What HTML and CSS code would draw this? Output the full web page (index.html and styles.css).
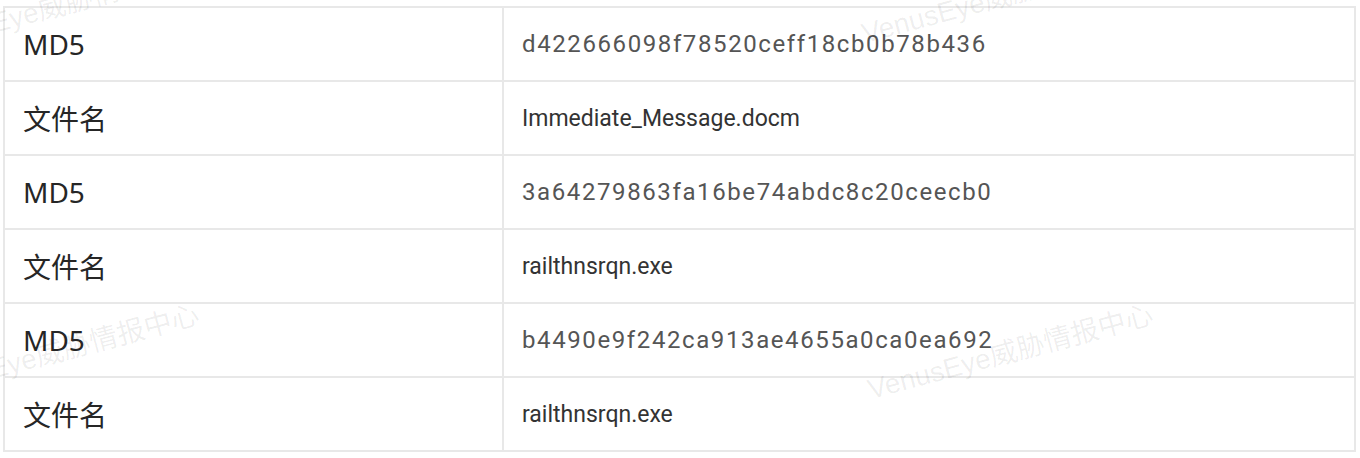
FILE: index.html
```html
<!DOCTYPE html>
<html lang="zh-CN">
<head>
<meta charset="utf-8">
<title>IOC</title>
<link rel="stylesheet" href="styles.css">
</head>
<body>
<div class="page">
  <table class="info">
    <tr><td class="label">MD5</td><td class="hash">d422666098f78520ceff18cb0b78b436</td></tr>
    <tr><td class="label">文件名</td><td class="file">Immediate_Message.docm</td></tr>
    <tr><td class="label">MD5</td><td class="hash">3a64279863fa16be74abdc8c20ceecb0</td></tr>
    <tr><td class="label">文件名</td><td class="file">railthnsrqn.exe</td></tr>
    <tr><td class="label">MD5</td><td class="hash">b4490e9f242ca913ae4655a0ca0ea692</td></tr>
    <tr><td class="label">文件名</td><td class="file">railthnsrqn.exe</td></tr>
  </table>
  <div class="wm wm-tl">VenusEye威胁情报中心</div>
  <div class="wm wm-tc">VenusEye威胁情报中心</div>
  <div class="wm wm-ml">VenusEye威胁情报中心</div>
  <div class="wm wm-br">VenusEye威胁情报中心</div>
</div>
</body>
</html>
```
FILE: styles.css
```css
html, body {
  margin: 0;
  padding: 0;
  background: #ffffff;
}
.page {
  position: relative;
  width: 1360px;
  height: 458px;
  overflow: hidden;
  padding: 6px 4px 0 3px;
  box-sizing: border-box;
}
.info {
  width: 1353px;
  border-collapse: collapse;
  border: 2px solid #e8e8e8;
  table-layout: fixed;
}
.info td {
  border: 2px solid #e8e8e8;
  height: 74px;
  padding: 0 0 0 18px;
  box-sizing: border-box;
  vertical-align: middle;
  white-space: nowrap;
}
.info td.label {
  width: 499px;
  font-family: "Noto Sans", "Noto Sans CJK SC", sans-serif;
  font-size: 28px;
  color: #262626;
}
.info td.hash {
  font-family: Roboto, "Noto Sans CJK SC", sans-serif;
  font-size: 24px;
  letter-spacing: 1.6px;
  color: #555555;
}
.info td.file {
  font-family: Roboto, "Noto Sans CJK SC", sans-serif;
  font-size: 23px;
  color: #333333;
}
.wm {
  position: absolute;
  font-family: "Liberation Sans", "Noto Sans CJK SC", sans-serif;
  font-size: 28px;
  line-height: 28px;
  color: rgba(0, 0, 0, 0.07);
  white-space: nowrap;
  transform-origin: 0 100%;
  transform: rotate(-15deg);
  pointer-events: none;
}
.wm-tl { left: -80px; top: 30px; }
.wm-tc { left: 866px; top: 20px; }
.wm-ml { left: -82px; top: 376px; }
.wm-br { left: 872px; top: 376px; }
```
